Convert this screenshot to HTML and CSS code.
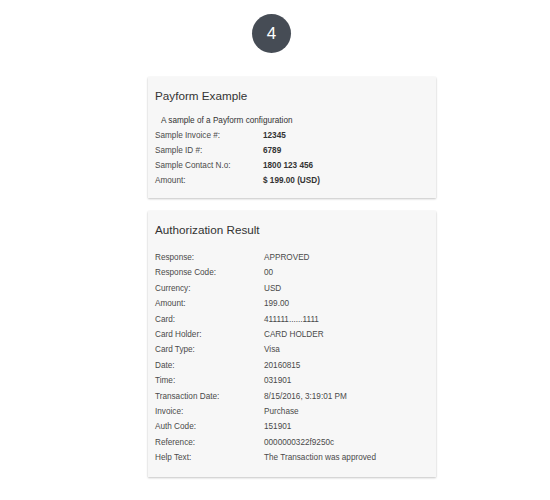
FILE: index.html
```html
<!DOCTYPE html>
<html lang="en">
<head>
    <meta charset="UTF-8">
    <title>Payform Example</title>
    <link rel="stylesheet" href="styles.css">
</head>
<body>
    <div class="page">
        <div class="step">4</div>

        <div class="card">
            <h2>Payform Example</h2>
            <p class="intro">A sample of a Payform configuration</p>
            <div class="rows summary">
                <span>Sample Invoice #:</span><b>12345</b>
                <span>Sample ID #:</span><b>6789</b>
                <span>Sample Contact N.o:</span><b>1800 123 456</b>
                <span>Amount:</span><b>$ 199.00 (USD)</b>
            </div>
        </div>

        <div class="card result">
            <h2>Authorization Result</h2>
            <div class="rows">
                <span>Response:</span><span>APPROVED</span>
                <span>Response Code:</span><span>00</span>
                <span>Currency:</span><span>USD</span>
                <span>Amount:</span><span>199.00</span>
                <span>Card:</span><span>411111......1111</span>
                <span>Card Holder:</span><span>CARD HOLDER</span>
                <span>Card Type:</span><span>Visa</span>
                <span>Date:</span><span>20160815</span>
                <span>Time:</span><span>031901</span>
                <span>Transaction Date:</span><span>8/15/2016, 3:19:01 PM</span>
                <span>Invoice:</span><span>Purchase</span>
                <span>Auth Code:</span><span>151901</span>
                <span>Reference:</span><span>0000000322f9250c</span>
                <span>Help Text:</span><span>The Transaction was approved</span>
            </div>
        </div>
    </div>
</body>
</html>
```

FILE: styles.css
```css
:root {
    --text-color: #333;
    --label-color: #4a4a4a;
    --card-bg: #f7f7f7;
    --step-bg: #464c55;
}

* {
    box-sizing: border-box;
    margin: 0;
    padding: 0;
}

body {
    font-family: 'Liberation Sans', Arial, sans-serif;
    background-color: #fff;
    color: var(--text-color);
}

.page {
    padding: 14px 0 20px 148px;
}

.step {
    width: 39px;
    height: 39px;
    margin-left: 104px;
    border-radius: 50%;
    background-color: var(--step-bg);
    color: #fff;
    font-size: 17px;
    font-weight: 300;
    line-height: 39px;
    text-align: center;
}

.card {
    width: 288px;
    margin-top: 24px;
    padding: 11px 7px 10px;
    background-color: var(--card-bg);
    box-shadow: 0 1px 2px rgba(0, 0, 0, 0.22), 0 0 1px rgba(0, 0, 0, 0.08);
}

.card + .card {
    margin-top: 13px;
}

h2 {
    font-size: 11.7px;
    font-weight: normal;
    line-height: 16px;
    color: var(--text-color);
    margin-bottom: 9px;
}

.intro {
    font-size: 8.2px;
    line-height: 15px;
    padding-left: 6px;
    color: var(--text-color);
}

.rows {
    display: grid;
    grid-template-columns: 108px 1fr;
    font-size: 8.2px;
    line-height: 15.4px;
    color: var(--label-color);
}

.summary {
    line-height: 15px;
}

.rows b {
    color: var(--text-color);
    font-weight: bold;
}

.result {
    padding-bottom: 11px;
}

.result h2 {
    margin-bottom: 12px;
}

.result .rows {
    grid-template-columns: 109px 1fr;
}
```
